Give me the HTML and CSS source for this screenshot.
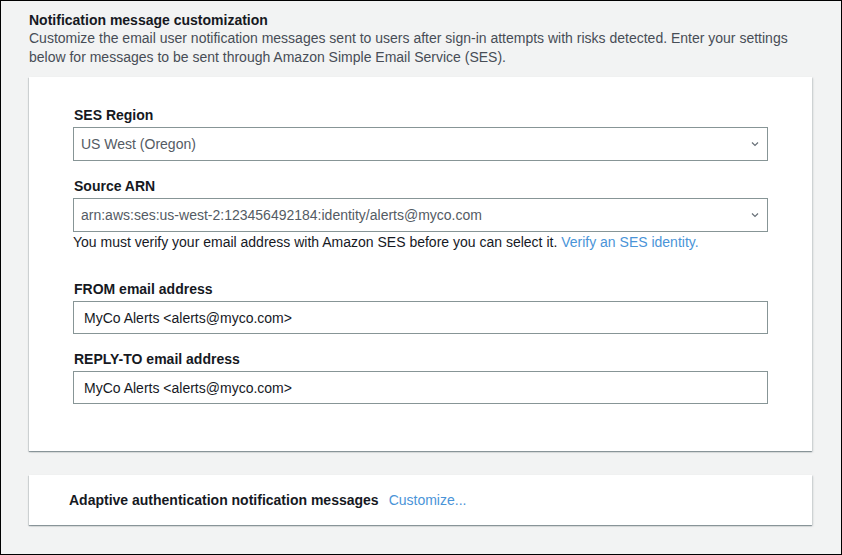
FILE: index.html
```html
<!DOCTYPE html>
<html>
<head>
<meta charset="utf-8">
<link rel="stylesheet" href="styles.css">
</head>
<body>
<div class="page">
  <div class="intro">
    <div class="title">Notification message customization</div>
    <div class="desc">Customize the email user notification messages sent to users after sign-in attempts with risks detected. Enter your settings below for messages to be sent through Amazon Simple Email Service (SES).</div>
  </div>
  <div class="card form-card">
    <div class="field">
      <div class="label">SES Region</div>
      <div class="select"><span>US West (Oregon)</span><svg class="chev" width="8" height="6" viewBox="0 0 8 6"><path d="M1 1.5 L4 4.5 L7 1.5" fill="none" stroke="#687078" stroke-width="1.2"/></svg></div>
    </div>
    <div class="field">
      <div class="label">Source ARN</div>
      <div class="select"><span>arn:aws:ses:us-west-2:123456492184:identity/alerts@myco.com</span><svg class="chev" width="8" height="6" viewBox="0 0 8 6"><path d="M1 1.5 L4 4.5 L7 1.5" fill="none" stroke="#687078" stroke-width="1.2"/></svg></div>
      <div class="help">You must verify your email address with Amazon SES before you can select it. <a class="link">Verify an SES identity.</a></div>
    </div>
    <div class="field spaced">
      <div class="label">FROM email address</div>
      <div class="input">MyCo Alerts &lt;alerts@myco.com&gt;</div>
    </div>
    <div class="field">
      <div class="label">REPLY-TO email address</div>
      <div class="input">MyCo Alerts &lt;alerts@myco.com&gt;</div>
    </div>
  </div>
  <div class="card msg-card">
    <span class="msg-title">Adaptive authentication notification messages</span>
    <a class="link">Customize...</a>
  </div>
</div>
</body>
</html>
```
FILE: styles.css
```css
html, body {
  margin: 0;
  padding: 0;
}
body {
  font-family: "Liberation Sans", Arial, sans-serif;
  font-size: 14px;
  color: #16191f;
}
.page {
  box-sizing: border-box;
  width: 842px;
  height: 555px;
  border: 1px solid #000;
  background: #f2f3f3;
  padding: 11px 29px 0 28px;
  display: flex;
  flex-direction: column;
}
.title {
  font-weight: bold;
  line-height: 17px;
  color: #16191f;
}
.desc {
  line-height: 19px;
  color: #474d56;
}
.card {
  background: #fff;
  box-shadow: 0 1px 1px 0 rgba(0,28,36,0.3), 1px 1px 2px 0 rgba(0,28,36,0.15), -1px 1px 1px 0 rgba(0,28,36,0.1);
}
.form-card {
  margin-top: 10px;
  padding: 29px 44px 47px 44px;
  display: flex;
  flex-direction: column;
  gap: 16px;
}
.field {
  display: flex;
  flex-direction: column;
}
.field.spaced {
  margin-top: 12px;
}
.label {
  font-weight: bold;
  line-height: 19px;
  padding-left: 1px;
  margin-bottom: 2px;
}
.select, .input {
  box-sizing: border-box;
  border: 1px solid #879596;
  display: flex;
  align-items: center;
}
.select {
  height: 34px;
  padding: 0 8px 0 7px;
  color: #545b64;
  justify-content: space-between;
}
.input {
  height: 33px;
  padding: 0 10px;
  color: #16191f;
}
.chev {
  display: block;
}
.help {
  margin-top: 1px;
  line-height: 19px;
  color: #16191f;
}
.link {
  color: #4a94d8;
  text-decoration: none;
}
.msg-card {
  margin-top: 24px;
  height: 50px;
  box-sizing: border-box;
  padding: 0 40px;
  display: flex;
  align-items: center;
  gap: 10px;
}
.msg-title {
  font-weight: bold;
}
```
